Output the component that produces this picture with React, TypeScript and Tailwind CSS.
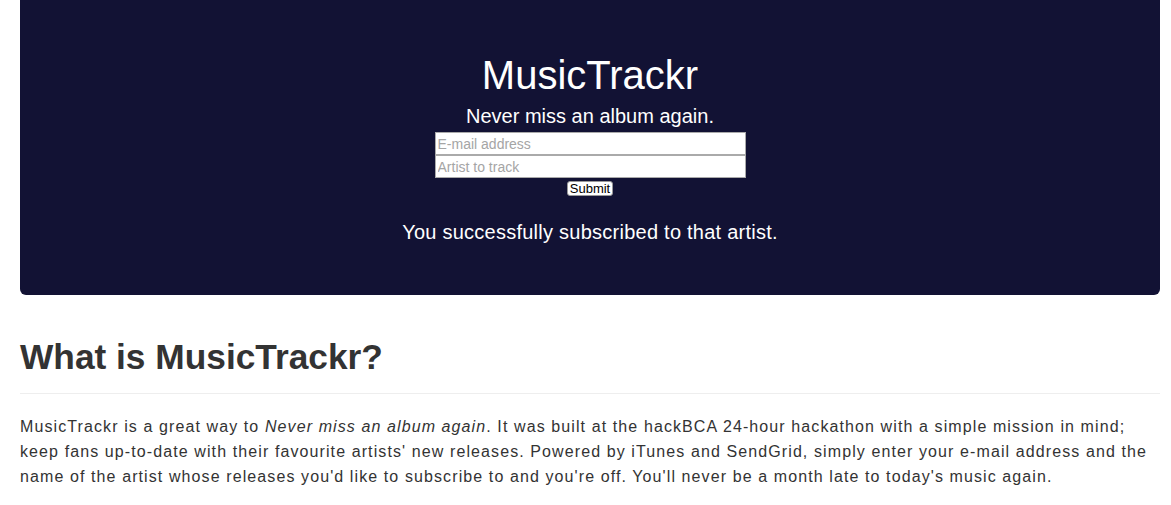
import React from 'react';

export default function App() {
    return (
        <div className="min-h-[505px] bg-white pl-5 pr-[11px] text-[#333] font-['Liberation_Sans',Arial,sans-serif]">
            {/* Jumbotron */}
            <div className="bg-[#121234] rounded-b-md text-white text-center pt-[51px] pb-[51px]">
                <h1 className="text-[40px] leading-[48px]">MusicTrackr</h1>
                <p className="text-[20px] leading-[24px] mt-[5px]">Never miss an album again.</p>
                <form className="flex flex-col items-center mt-[4px]" onSubmit={(e) => e.preventDefault()}>
                    <input
                        type="text"
                        placeholder="E-mail address"
                        className="w-[311px] h-[23px] bg-white border border-[#aaa] px-[2px] text-[14px] text-black placeholder:text-[#a5a5a5] outline-none"
                    />
                    <input
                        type="text"
                        placeholder="Artist to track"
                        className="w-[311px] h-[23px] bg-white border border-[#aaa] px-[2px] text-[14px] text-black placeholder:text-[#a5a5a5] outline-none"
                    />
                    <button
                        type="submit"
                        className="mt-[3px] w-[46px] h-[15px] bg-white text-black text-[13px] leading-[13px] rounded-[3px] border border-[#999]"
                    >
                        Submit
                    </button>
                </form>
                <p className="text-[20px] leading-[24px] tracking-[0.25px] mt-[24px]">You successfully subscribed to that artist.</p>
            </div>

            {/* About */}
            <h2 className="mt-[42px] text-[35.3px] leading-[40px] font-bold text-[#333]">What is MusicTrackr?</h2>
            <hr className="mt-[16px] border-t border-[#eee]" />
            <p className="mt-[20px] pr-[10px] text-[16px] leading-[25px] tracking-[1.1px] text-[#333]">
                MusicTrackr is a great way to <em>Never miss an album again</em>. It was built at the hackBCA 24-hour hackathon with a simple mission in mind; keep fans up-to-date with their favourite artists' new releases. Powered by iTunes and SendGrid, simply enter your e-mail address and the name of the artist whose releases you'd like to subscribe to and you're off. You'll never be a month late to today's music again.
            </p>
        </div>
    );
}
